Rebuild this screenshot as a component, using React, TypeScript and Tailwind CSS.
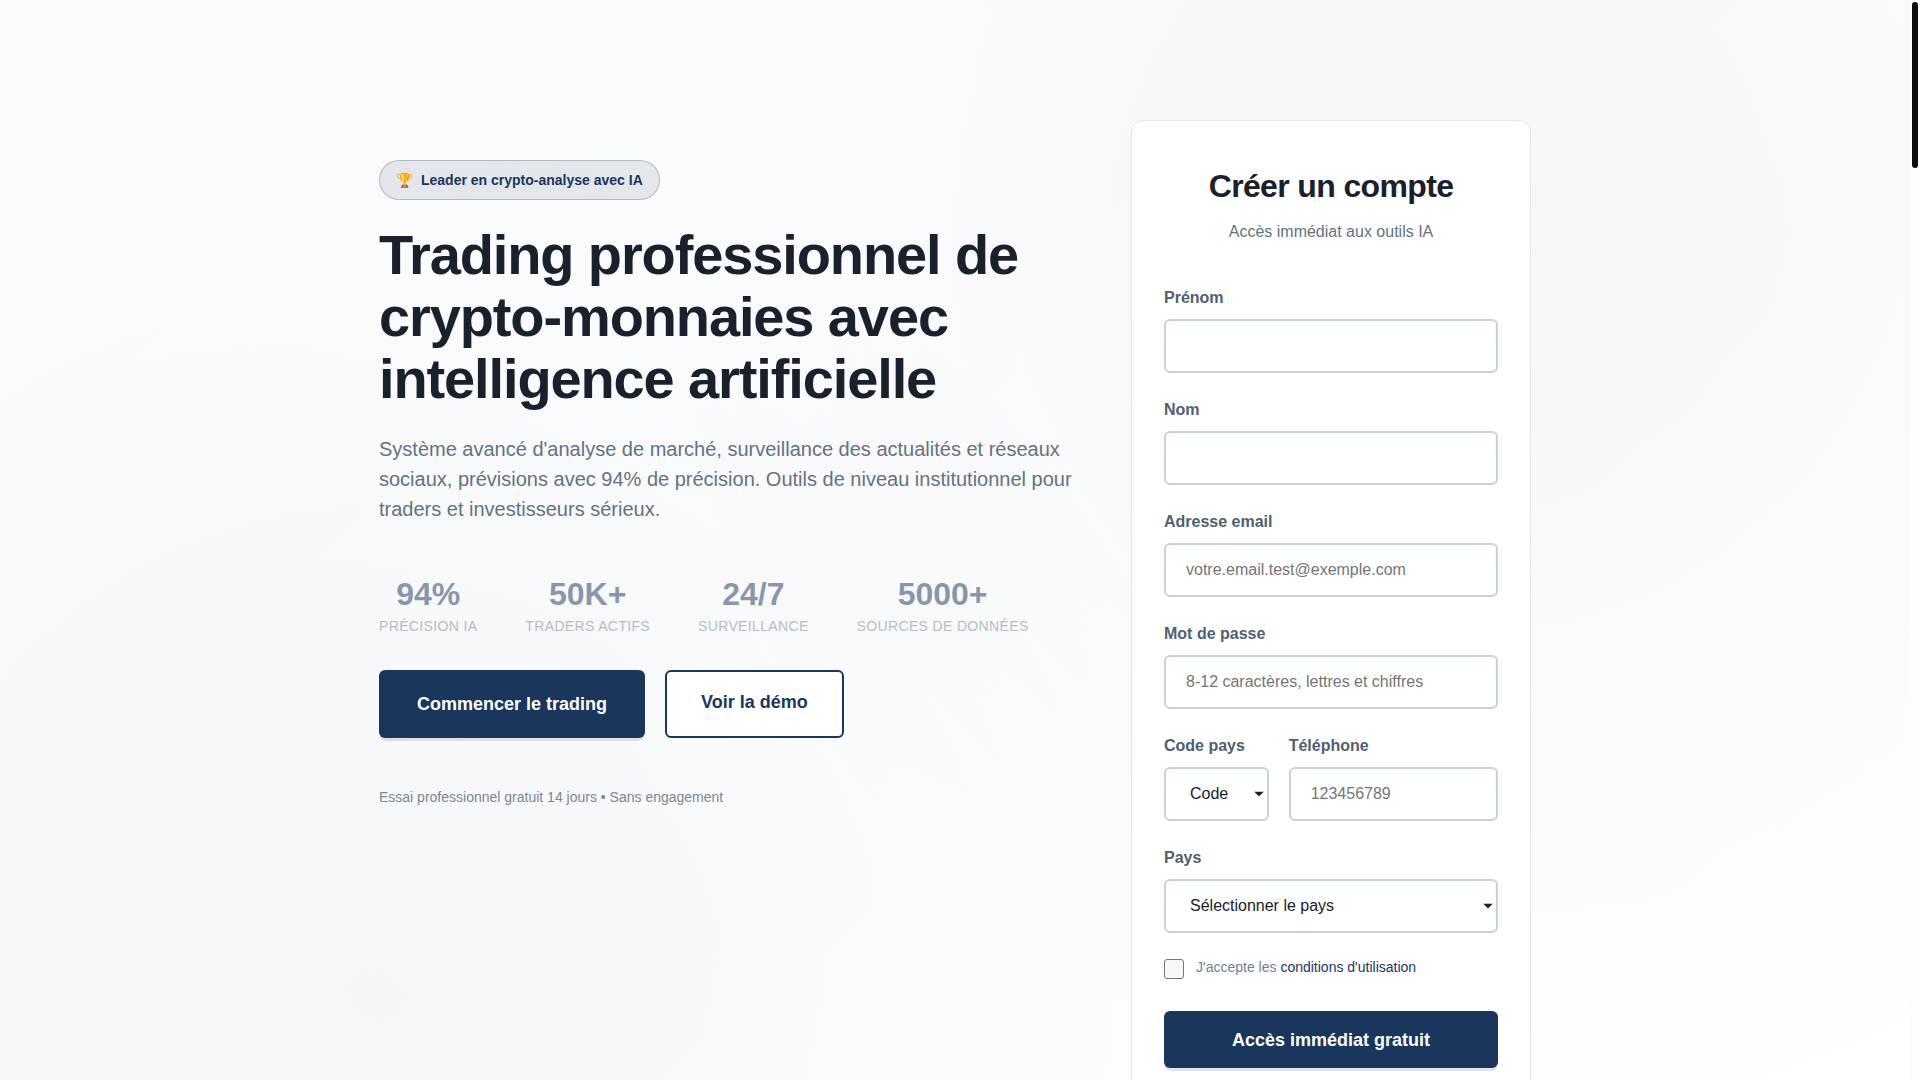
import type { ReactNode } from "react";

const stats = [
  { value: "94%", label: "Précision IA" },
  { value: "50K+", label: "Traders actifs" },
  { value: "24/7", label: "Surveillance" },
  { value: "5000+", label: "Sources de données" },
];

const control =
  "block w-full h-[54px] rounded-md border-2 border-[#c8d2dc] bg-white text-base text-[#1a202c] placeholder:text-[#757575]";

function Field({ id, label, children }: { id: string; label: string; children: ReactNode }) {
  return (
    <div className="mb-6">
      <label htmlFor={id} className="block mb-2 text-base leading-[26px] font-semibold text-[#4f5f6f]">
        {label}
      </label>
      {children}
    </div>
  );
}

function Select({ id, placeholder }: { id: string; placeholder: string }) {
  return (
    <div className="relative">
      <select id={id} className={`${control} pl-6 pr-4 appearance-none`}>
        <option>{placeholder}</option>
      </select>
      <svg
        viewBox="0 0 10 5"
        className="absolute right-[5px] top-1/2 w-[10px] h-[5px] -translate-y-1/2 pointer-events-none"
        aria-hidden="true"
      >
        <path d="M0 0h10L5 5z" fill="#1a202c" />
      </svg>
    </div>
  );
}

function Intro() {
  return (
    <div className="pt-10">
      <div className="flex w-fit items-center gap-2 h-10 px-4 rounded-full border border-[#1a365d]/25 bg-[#1a365d]/10 text-sm font-semibold text-[#1a365d]">
        <span>🏆</span>
        <span>Leader en crypto-analyse avec IA</span>
      </div>

      <h1 className="my-6 text-[56px] leading-[62px] font-bold tracking-[-0.02em] text-[#1a202c]">
        Trading professionnel de crypto-monnaies avec intelligence artificielle
      </h1>

      <p className="text-xl leading-[30px] text-[#647282]">
        Système avancé d'analyse de marché, surveillance des actualités et réseaux sociaux, prévisions
        avec 94% de précision. Outils de niveau institutionnel pour traders et investisseurs sérieux.
      </p>

      <dl className="flex gap-12 mt-[54px] mb-8 opacity-50">
        {stats.map((s) => (
          <div key={s.label} className="flex flex-col-reverse text-center">
            <dt className="mt-1 text-sm leading-6 uppercase tracking-wide text-[#718096]">{s.label}</dt>
            <dd className="text-[32px] leading-8 font-bold text-[#1a365d]">{s.value}</dd>
          </div>
        ))}
      </dl>

      <div className="flex gap-5">
        <a
          href="#inscription"
          className="flex items-center h-[68px] px-[38px] rounded-md bg-[#1a365d] text-lg font-semibold text-white shadow-[0_4px_0_-1px_rgba(0,0,0,0.1)]"
        >
          Commencer le trading
        </a>
        <a
          href="#demo"
          className="h-[68px] pt-4 px-[34px] rounded-md border-2 border-[#1a365d] bg-white text-lg font-semibold text-[#1a365d]"
        >
          Voir la démo
        </a>
      </div>

      <p className="mt-12 text-sm leading-[22px] text-[#7b8794]">
        Essai professionnel gratuit 14 jours • Sans engagement
      </p>
    </div>
  );
}

function SignupCard() {
  return (
    <form id="inscription" className="rounded-xl border border-[#e2e6ea] bg-white px-8 pt-10 pb-8">
      <div className="mb-10 text-center">
        <h2 className="mb-2 text-[32px] leading-[50px] font-bold tracking-[-0.02em] text-[#1a202c]">
          Créer un compte
        </h2>
        <p className="text-base leading-[26px] text-[#647282]">Accès immédiat aux outils IA</p>
      </div>

      <Field id="prenom" label="Prénom">
        <input id="prenom" type="text" className={`${control} px-5`} />
      </Field>
      <Field id="nom" label="Nom">
        <input id="nom" type="text" className={`${control} px-5`} />
      </Field>
      <Field id="email" label="Adresse email">
        <input
          id="email"
          type="email"
          placeholder="votre.email.test@exemple.com"
          className={`${control} px-5`}
        />
      </Field>
      <Field id="password" label="Mot de passe">
        <input
          id="password"
          type="password"
          placeholder="8-12 caractères, lettres et chiffres"
          className={`${control} px-5`}
        />
      </Field>

      <div className="grid grid-cols-[1fr_2fr] gap-5">
        <Field id="code" label="Code pays">
          <Select id="code" placeholder="Code" />
        </Field>
        <Field id="tel" label="Téléphone">
          <input id="tel" type="tel" placeholder="123456789" className={`${control} px-5`} />
        </Field>
      </div>

      <Field id="pays" label="Pays">
        <Select id="pays" placeholder="Sélectionner le pays" />
      </Field>

      <div className="flex items-start gap-3 mb-8">
        <input
          id="terms"
          type="checkbox"
          className="size-5 mt-0.5 appearance-none rounded-[3px] border border-[#767676] bg-[#f8f8f8] checked:bg-[#1a365d]"
        />
        <label htmlFor="terms" className="text-sm leading-5 text-[#718096]">
          J'accepte les{" "}
          <a href="#conditions" className="text-[#1a365d]">
            conditions d'utilisation
          </a>
        </label>
      </div>

      <button
        type="submit"
        className="w-full h-[57px] rounded-md bg-[#1a365d] text-lg font-semibold text-white shadow-[0_4px_0_-1px_rgba(0,0,0,0.1)]"
      >
        Accès immédiat gratuit
      </button>
    </form>
  );
}

export default function App() {
  return (
    <div className="flex h-screen overflow-hidden bg-white font-['Liberation_Sans',Arial,sans-serif]">
      <main className="flex-1">
        <section className="min-h-[1250px] py-[120px] bg-[radial-gradient(circle_at_20%_80%,rgba(26,54,93,0.03)_0%,transparent_50%),radial-gradient(circle_at_80%_20%,rgba(26,54,93,0.03)_0%,transparent_50%),linear-gradient(135deg,#fafbfc_0%,#ffffff_100%)]">
          <div className="grid grid-cols-[minmax(0,1fr)_400px] items-start gap-12 max-w-[1200px] mx-auto px-6">
            <Intro />
            <SignupCard />
          </div>
        </section>
      </main>

      {/* scroll rail */}
      <div className="w-[10px] p-0.5 bg-[#fdfdfd]">
        <div className="h-[166px] rounded-full bg-[#0d0d0d]" />
      </div>
    </div>
  );
}
